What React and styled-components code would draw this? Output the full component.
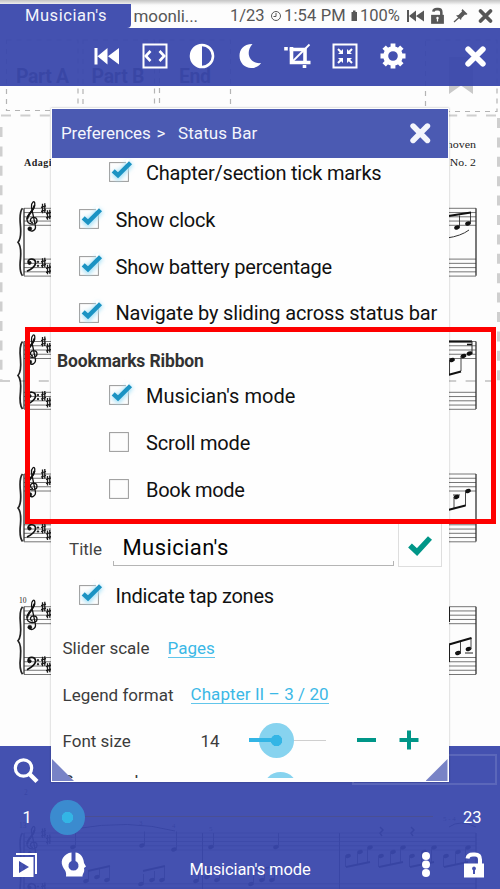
import React from "react";
import styled, { createGlobalStyle } from "styled-components";

const Global = createGlobalStyle`
  * { box-sizing: border-box; }
  body { margin: 0; background: #fdfdfd; }
`;

const Screen = styled.div`
  position: relative;
  display: grid;
  width: 500px;
  height: 889px;
  overflow: hidden;
  background: #fdfdfd;
  font-family: Roboto, "Noto Sans", sans-serif;
  color: #111;
`;

const SheetArt = styled.svg`
  grid-area: 1 / 1;
  display: block;
`;

const Chrome = styled.div`
  grid-area: 1 / 1;
  z-index: 1;
  display: flex;
  flex-direction: column;
  justify-content: space-between;
`;

const Label = styled.span`
  font-size: ${(p) => p.$size || 20}px;
  font-weight: ${(p) => p.$weight || 400};
  letter-spacing: ${(p) => p.$track || 0}px;
  color: ${(p) => p.$color || "inherit"};
  line-height: 1.2;
  white-space: pre;
`;

const StatusBar = styled.div`
  display: flex;
  height: 27.5px;
  padding-top: 4px;
  background: linear-gradient(#c4c4c4 0, #d8d8d8 2px, #fafafa 5px, #fdfdfd 8px);
  color: #575757;
`;

const Tab = styled.div`
  width: 131px;
  padding: 2px 0 0 25px;
  border-bottom-right-radius: 4px;
  background: #4451b0;
  color: #f3f4fb;
`;

const StatusText = styled.div`
  width: ${(p) => p.$w}px;
  padding: 2px 0 0 ${(p) => p.$pad || 0}px;
`;

const StatusIcons = styled.svg`
  display: block;
  width: 95px;
  height: 23px;
`;

const Toolbar = styled.div`
  display: grid;
  grid-template-columns: 83px repeat(7, 47.7px) 1fr;
  align-items: center;
  justify-items: center;
  height: 58px;
  padding-bottom: 1px;
  background: rgba(58, 72, 172, 0.95);
  color: #fff;
`;

const Icon = styled.svg`
  display: block;
  width: ${(p) => p.$s || 28}px;
  height: ${(p) => p.$s || 28}px;
  overflow: visible;
`;

const CloseSlot = styled.div`
  justify-self: end;
  margin-right: 14px;
`;

const Footer = styled.div`
  height: 143.5px;
  display: grid;
  grid-template-rows: 48px 48px 47.5px;
  background: rgba(58, 72, 172, 0.95);
  color: #fff;
`;

const SearchRow = styled.div`
  display: flex;
  align-items: center;
  justify-content: space-between;
  padding: 0 3px 0 12px;
`;

const SearchBox = styled.div`
  width: 145px;
  height: 31px;
  margin-top: -1px;
  border: 2px solid #5b67ba;
`;

const PageRow = styled.div`
  display: grid;
  grid-template-columns: 49.5px 1fr 67px;
  align-items: center;
`;

const PageLabel = styled.div`
  padding-left: ${(p) => p.$pad}px;
`;

const PageTrack = styled.div`
  display: flex;
  align-items: center;
  height: 35px;
  background: linear-gradient(#4a4f93, #4a4f93) 17px 16px / 100% 1px no-repeat;
`;

const Thumb = styled.div`
  width: 35px;
  height: 35px;
  border-radius: 50%;
  background:
    linear-gradient(#33b5e5, #33b5e5) 0 15.5px / ${(p) => (p.$bar ? 17 : 0)}px 4px no-repeat,
    radial-gradient(circle, #33b5e5 5.4px, ${(p) => p.$halo} 6px);
`;

const ModeRow = styled.div`
  display: grid;
  grid-template-columns: 50px 48px 1fr 48px 53px;
  align-items: center;
  justify-items: center;
`;

const ModeLabel = styled.div`
  padding-top: 9px;
  padding-left: 3px;
`;

const Dialog = styled.section`
  position: absolute;
  z-index: 2;
  left: 51px;
  top: 107.5px;
  width: 397.5px;
  height: 674.5px;
  padding: 1px 1px 4px;
  background: #fefefe;
  box-shadow: 0 0 2px rgba(0, 0, 0, 0.3);
`;

const DialogHeader = styled.header`
  display: flex;
  align-items: center;
  height: 49px;
  padding: 0 17px 0 9px;
  background: #4b5ab2;
  color: #f4f5fc;
`;

const Crumb = styled.div`
  width: ${(p) => p.$w}px;
`;

const HeaderClose = styled.div`
  margin-left: auto;
`;

const Viewport = styled.div`
  height: 620px;
  overflow: hidden;
`;

const Options = styled.div`
  margin-top: -8.7px;
`;

const CheckRow = styled.label`
  display: flex;
  align-items: center;
  height: 46.8px;
  padding-left: ${(p) => (p.$nested ? 57 : 26.5)}px;
  gap: 17px;
`;

const CheckText = styled.div`
  padding-top: 1.5px;
`;

const Heading = styled.h3`
  height: 36px;
  margin: 0;
  padding: 14.5px 0 0 5px;
  line-height: 1;
`;

const TitleRow = styled.div`
  display: flex;
  height: 59px;
  padding-left: 17px;
`;

const TitleLabel = styled.div`
  width: 43.5px;
  padding-top: 27px;
`;

const TitleField = styled.div`
  position: relative;
  width: 281px;
  height: 54px;
  padding: 23px 0 0 10px;
  border-bottom: 1.5px solid #b5b5b5;
  color: #050505;
  &::before, &::after {
    content: "";
    position: absolute;
    bottom: 0;
    width: 1px;
    height: 4px;
    background: #b5b5b5;
  }
  &::before { left: 0; }
  &::after { right: 0; }
`;

const ApplyButton = styled.div`
  display: grid;
  place-items: center;
  width: 44px;
  height: 47px;
  margin: 8px 0 0 4px;
  padding-top: 5px;
  border: 1px solid #dedede;
`;

const SettingRow = styled.div`
  display: flex;
  align-items: center;
  height: 46.5px;
  margin-top: ${(p) => p.$gap || 0}px;
  padding-left: 10.5px;
  color: #3c3c3c;
`;

const PeekRow = styled(SettingRow)`
  align-items: flex-start;
  padding-top: 7.5px;
`;

const Cell = styled.div`
  width: ${(p) => p.$w}px;
`;

const PeekLabel = styled(Cell)`
  margin-top: -1px;
`;

const Link = styled(Label)`
  display: inline-block;
  border-bottom: 1.5px solid #62c6eb;
  line-height: 18px;
`;

const Slider = styled.div`
  display: flex;
  align-items: center;
  width: 77px;
  height: 35px;
  margin-top: -2px;
  padding-left: 10px;
  background:
    linear-gradient(#33b5e5, #33b5e5) 0 15.5px / 27px 4px no-repeat,
    linear-gradient(#cfcfcf, #cfcfcf) 0 17px / 77px 1px no-repeat;
`;

const Steppers = styled.svg`
  margin: -2px 0 0 31px;
  width: 64px;
  height: 24px;
`;

const Corner = styled.div`
  position: absolute;
  bottom: 1px;
  ${(p) => (p.$right ? "right: 1px;" : "left: 1px;")}
  width: 22px;
  height: 22px;
  background: #7883c6;
  clip-path: ${(p) => (p.$right ? "polygon(100% 0, 100% 100%, 0 100%)" : "polygon(0 0, 100% 100%, 0 100%)")};
`;

const Highlight = styled.div`
  position: absolute;
  z-index: 3;
  left: 25px;
  top: 327px;
  width: 471px;
  height: 197px;
  border: 5px solid #fe0000;
`;

const Cross = ({ size = 21 }) => (
  <Icon $s={size} viewBox="0 0 20 20">
    <path d="M3 3 17 17M17 3 3 17" stroke="currentColor" strokeWidth="5.400" strokeLinecap="round" />
  </Icon>
);

const LockShape = ({ hole }) => (
  <>
    <path d="M6 6.500Q6.500 2.500 11.500 2.500H13.500Q18.500 2.500 18.500 7.500V13" fill="none" stroke="currentColor" strokeWidth="4" />
    <rect x="2.500" y="11.500" width="20" height="14" fill="currentColor" />
    <path d="M12.500 14.500a2 2 0 0 1 1 3.700V22h-2V18.200a2 2 0 0 1 1-3.700Z" fill={hole} />
  </>
);

const Check = ({ on }) => (
  <Icon $s={20} viewBox="0 0 20 20">
    <defs>
      <filter id="glow" x="-50%" y="-50%" width="200%" height="200%"><feGaussianBlur stdDeviation="2" /></filter>
    </defs>
    <rect x=".6" y=".6" width="18.800" height="18.800" fill="#fdfdfd" stroke="#999" strokeWidth="1" />
    {on && (
      <>
        <path d="M4.500 10 9.200 14.300 21.500 1" fill="none" stroke="#a8e2f7" strokeWidth="7" filter="url(#glow)" />
        <path d="M17 0 20 -1" stroke="#fff" strokeWidth="4" />
        <path d="M4.200 8.800 9 13.300 21.500 .8" fill="none" stroke="#1b93c3" strokeWidth="4.400" />
      </>
    )}
  </Icon>
);

const Treble = ({ y }) => (
  <g transform={`translate(32 ${y})`} fill="none" stroke="#111">
    <path d="M-3.500 20.500C-1 25 4.500 22 3.300 17L-.5-1C-1-6 3-9 2.800-4 2.300 3-5 5-5 11-5 17 5 17.500 5 12.500 5 8-2 8-1.500 12.500Q-1 14.500 1 14.500" strokeWidth="1.300" />
    <path d="M2.500-3C1.500 3-4.500 6-4.700 11" strokeWidth="2" />
    <circle cx="-2.200" cy="20.500" r="2" fill="#111" strokeWidth=".5" />
  </g>
);

const Bass = ({ y }) => (
  <g transform={`translate(31 ${y})`} fill="none" stroke="#111">
    <path d="M-3 3C-3-2 5-1 4.500 4 4 8 0 10-4 12" strokeWidth="1.700" />
    <circle cx="-1.500" cy="3.500" r="1.600" fill="#111" />
    <circle cx="7" cy="2.500" r=".7" fill="#111" /><circle cx="7" cy="6.500" r=".7" fill="#111" />
  </g>
);

const Sharp = ({ x, y }) => (
  <path d={`M${x - 1} ${y - 4.500}v9.500M${x + 1.300} ${y - 5}v9.500M${x - 2.500} ${y - 1}l5-1.500M${x - 2.500} ${y + 3}l5-1.500`} stroke="#1a1a1a" strokeWidth="1.300" />
);

const Note = ({ x, y, stem = 0 }) => (
  <g>
    <ellipse cx={x} cy={y} rx="2.900" ry="2" transform={`rotate(-20 ${x} ${y})`} fill="#111" />
    {stem !== 0 && <path d={`M${x + (stem < 0 ? 2.500 : -2.500)} ${y}v${stem}`} stroke="#333" strokeWidth=".9" />}
  </g>
);

const System = ({ y }) => (
  <g>
    {[0, 1, 2, 3, 4].map((i) => (
      <path key={i} d={`M24 ${y + i * 4.250}H476M24 ${y + 50.800 + i * 4.250}H476`} stroke="#767676" strokeWidth="1" />
    ))}
    <path d={`M24 ${y}V${y + 67.500}M476 ${y}V${y + 67.500}`} stroke="#333" strokeWidth="1.300" />
    <path d={`M22.500 ${y}Q19 ${y + 4} 20.500 ${y + 18}Q21.500 ${y + 30} 18 ${y + 34}Q21.500 ${y + 38} 20.500 ${y + 50}Q19 ${y + 63} 22.500 ${y + 67.500}`} fill="none" stroke="#222" strokeWidth="1.700" />
    <Treble y={y} />
    <Bass y={y + 51} />
    <Sharp x={43.500} y={y} /><Sharp x={48.500} y={y + 6.500} />
    <Sharp x={43.500} y={y + 54.500} /><Sharp x={48.500} y={y + 61} />
  </g>
);

const SerifGroup = styled.g`
  font-family: "Liberation Serif", serif;
  font-size: ${(p) => p.$size}px;
  fill: #222;
`;

const Sheet = () => (
  <SheetArt width="500" height="889" viewBox="0 0 500 889" aria-hidden="true">
    <g fill="none" stroke="#b4b4b4" strokeWidth="1.200" strokeDasharray="5 5">
      <path d="M6.500 40H78V110.500H6.500Z" /><path d="M83 40H154.500V110.500H83Z" />
      <path d="M159.500 40H230.500V110.500H159.500Z" /><path d="M425.500 40H497V111.500H425.500Z" />
    </g>
    <g fill="none" stroke="#cfcfcf">
      <path d="M1 127V381M498.500 118V381" strokeWidth="3" strokeDasharray="10 9.400" />
      <path d="M1 115.500H500M0 381H500" strokeWidth="2" strokeDasharray="10 9.400" />
    </g>
    <path d="M449 57H473V94L461 85.500 449 94Z" fill="#c9c9c9" />
    <g fill="#333" fontFamily="Roboto" fontWeight="700" fontSize="19.500" textAnchor="middle">
      <text x="42.500" y="83" textLength="53">Part A</text>
      <text x="118" y="83" textLength="53">Part B</text>
      <text x="195" y="83" textLength="32">End</text>
    </g>
    <SerifGroup $size={10}>
      <text x="24" y="166" fontWeight="700" textLength="54">Adagio sost</text>
      <text x="391" y="148" textLength="85" lengthAdjust="spacingAndGlyphs">L. van Beethoven</text>
      <text x="412" y="166" textLength="64" lengthAdjust="spacingAndGlyphs">Op. 27, No. 2</text>
    </SerifGroup>
    <SerifGroup $size={7.500}>
      <text x="19" y="603">10</text>
      <text x="24" y="795">2</text><text x="19" y="828">13</text>
    </SerifGroup>
    {[208.300, 341.500, 474, 606.700, 833].map((y) => <System key={y} y={y} />)}
    <g>
      <Note x={457} y={227.500} stem={-12} /><Note x={468} y={223.500} stem={-11} />
      <path d="M445 216.500 471 212.500" stroke="#111" strokeWidth="2" />
      <path d="M447 238Q461 236 469 230" fill="none" stroke="#333" strokeWidth="1" />
      <path d="M448 341.500H472" stroke="#111" strokeWidth="2.200" /><path d="M467 344.500H472" stroke="#111" strokeWidth="1.600" />
      <path d="M472 341V354" stroke="#333" /><Note x={452} y={360} stem={15} /><Note x={463.500} y={356} stem={15} /><Note x={469.500} y={353.500} />
      <path d="M448 375 461 371.500" stroke="#111" strokeWidth="2" />
      <path d="M453 495H460" stroke="#333" /><Note x={456.500} y={497} stem={12} /><Note x={468} y={491} stem={15} />
      <path d="M448 510 465.500 505.500" stroke="#111" strokeWidth="2" />
      <Note x={458} y={653} stem={-11} /><Note x={468.500} y={649} stem={-11} />
      <path d="M449 644.500 471.500 638" stroke="#111" strokeWidth="2" /><path d="M449.500 607V622M449.500 644V662M455 653h6M465 653h8" stroke="#222" />
    </g>
    <g>
      <path d="M74 829Q130 819 175 831" fill="none" stroke="#222" />
      <path d="M202.500 833V889M339.500 833V889" stroke="#333" />
      <Note x={73} y={847} stem={-14} /><Note x={142} y={845.500} stem={-14} /><Note x={174} y={849.500} stem={-18} />
      <Note x={211} y={847} stem={-14} /><Note x={276} y={847} stem={-14} />
      {[0, 1, 2, 3].map((i) => (
        <g key={i}>
          <Note x={86 + i * 55} y={881 + (i % 2) * 3} stem={-10} />
          <Note x={97 + i * 55} y={877 + (i % 2) * 3} stem={-9} />
          <Note x={107 + i * 55} y={880} stem={-14} />
          <path d={`M${88 + i * 55} 871l22-5`} stroke="#111" strokeWidth="2" />
        </g>
      ))}
      {[348, 381, 412, 446].map((x) => (
        <g key={x}>
          <Note x={x} y={856} stem={11} /><Note x={x + 12} y={852} stem={13} /><Note x={x + 22} y={847.500} stem={15} />
          <path d={`M${x - 2} 867l24-5`} stroke="#111" strokeWidth="2" />
        </g>
      ))}
      <path d="M380 827l3 3-3 3 2 3M411 827l3 3-3 3 2 3" fill="none" stroke="#222" strokeWidth="1.500" />
      <path d="M449 827Q460 819 476 827" fill="none" stroke="#222" />
      <SerifGroup $size={7}>
        <text x="139" y="825">3</text><text x="172" y="828">4</text><text x="209" y="831">5</text><text x="443" y="821">5 - 4</text>
      </SerifGroup>
    </g>
  </SheetArt>
);

const Status = () => (
  <StatusBar>
    <Tab><Label $size={16.500} $track={0.550}>Musician's</Label></Tab>
    <StatusText $w={99} $pad={2.500}><Label $size={17} $track={-0.100}>moonli...</Label></StatusText>
    <StatusText $w={40}><Label $size={16.500}>1/23</Label></StatusText>
    <Icon $s={12} viewBox="0 0 12 12">
      <g transform="translate(0 6)"><circle cx="6" cy="6" r="4.500" fill="none" stroke="currentColor" /><path d="M6 3V6.500H3.500" fill="none" stroke="currentColor" /></g>
    </Icon>
    <StatusText $w={68} $pad={2}><Label $size={16.500} $track={0.150}>1:54 PM</Label></StatusText>
    <Icon $s={9} viewBox="0 0 9 9">
      <path d="M1.500 8H3V6.500H5.500V8H7V17H1.500Z" fill="currentColor" />
    </Icon>
    <StatusText $w={46} $pad={1}><Label $size={16.500}>100%</Label></StatusText>
    <StatusIcons viewBox="405 4 95 23">
      <g fill="currentColor">
        <path d="M407 10h2v12h-2zM416 10.500v11L409 16zM424 10.500v11L416 16z" />
        <g transform="translate(429.500 7.500) scale(.64)"><LockShape hole="#fdfdfd" /></g>
        <path d="M462.500 9 467.500 14 466 15 465 14.500 461.500 18 461 20 456 15.500 458.500 15 462 11.500 461.500 10.500Z" />
        <path d="M459 17.500 454 22" stroke="currentColor" strokeWidth="1.300" />
      </g>
      <path d="M480.500 11 490.500 21M490.500 11 480.500 21" stroke="currentColor" strokeWidth="3.800" strokeLinecap="round" />
    </StatusIcons>
  </StatusBar>
);

const Tools = () => (
  <Toolbar>
    <span />
    <Icon viewBox="0 0 28 28"><path d="M1.500 6H4.500V22.500H1.500ZM14.500 6V22.500L4.500 14.200ZM26 6V22.500L15 14.200Z" fill="currentColor" /></Icon>
    <Icon viewBox="0 0 28 28"><path d="M2.500 2.500H25.500V25.500H2.500Z" fill="none" stroke="currentColor" strokeWidth="2" /><path d="M9.500 9 4.800 14 9.500 19M18.500 9 23.200 14 18.500 19" fill="none" stroke="currentColor" strokeWidth="2.600" /></Icon>
    <Icon viewBox="0 0 28 28"><circle cx="14" cy="14" r="11" fill="none" stroke="currentColor" strokeWidth="2.600" /><path d="M14 3A11 11 0 0 0 14 25Z" fill="currentColor" /></Icon>
    <Icon viewBox="0 0 28 28"><path d="M16.500 2C7 2 3.500 8 3.500 14 3.500 21 9 26 15 26 20 26 23 24 25 21 14 22.500 8.500 11 16.500 2Z" fill="currentColor" /></Icon>
    <Icon viewBox="0 0 28 28"><path d="M5.500 7.500H21V21.500M7.500 5V20.500H26.500M2 5V8.500M20.500 23V26" fill="none" stroke="currentColor" strokeWidth="3.600" /><path d="M9 19 25.500 2.500" stroke="currentColor" strokeWidth="1.800" /></Icon>
    <Icon viewBox="0 0 28 28">
      <path d="M2.500 2.500H25.500V25.500H2.500Z" fill="none" stroke="currentColor" strokeWidth="2" />
      <path d="M12 7V12H7ZM16 7V12H21ZM7 16H12V21ZM21 16H16V21Z" fill="currentColor" />
      <path d="M7 7 11 11M21 7 17 11M7 21 11 17M21 21 17 17" stroke="currentColor" strokeWidth="2" />
    </Icon>
    <Icon viewBox="0 0 28 28">
      <circle cx="14" cy="14" r="7.300" fill="none" stroke="currentColor" strokeWidth="5" />
      {[0, 45, 90, 135].map((a) => <path key={a} d="M14 1.500V6M14 22V26.500" transform={`rotate(${a} 14 14)`} stroke="currentColor" strokeWidth="4.800" />)}
    </Icon>
    <CloseSlot><Cross size={21} /></CloseSlot>
  </Toolbar>
);

const Bottom = () => (
  <Footer>
    <SearchRow>
      <Icon $s={28} viewBox="0 0 28 28"><circle cx="11.500" cy="12" r="8.200" fill="none" stroke="currentColor" strokeWidth="3.200" /><path d="M17 17.500 25 25.500" stroke="currentColor" strokeWidth="4.500" /></Icon>
      <SearchBox />
    </SearchRow>
    <PageRow>
      <PageLabel $pad={22.500}><Label $size={16.500}>1</Label></PageLabel>
      <PageTrack><Thumb $halo="#3b8bcf" /></PageTrack>
      <PageLabel $pad={30}><Label $size={16.500}>23</Label></PageLabel>
    </PageRow>
    <ModeRow>
      <Icon $s={28} viewBox="0 0 28 28">
        <path d="M5 2H26V23H24V4H5Z" fill="currentColor" />
        <path fillRule="evenodd" d="M2 6H22.500V26H2ZM8 10V22L18 16Z" fill="currentColor" />
      </Icon>
      <Icon $s={28} viewBox="0 0 28 28">
        <path d="M11.500 1.500C4 2.500 0 9 2.500 15 3.500 18 7 20 6 25.500H22.500C22.500 22 25 22 24 17L26 15.500 24 12C23.500 6 20.500 2 15.500 1.500V10A5 5 0 1 1 11.500 10Z" fill="currentColor" />
      </Icon>
      <ModeLabel><Label $size={16.500} $track={-0.100}>Musician's mode</Label></ModeLabel>
      <Icon $s={28} viewBox="-3 0 28 28">{[5, 13.500, 22].map((y) => <circle key={y} cx="14" cy={y} r="4" fill="currentColor" />)}</Icon>
      <Icon $s={26} viewBox="-.5 0 26 26"><LockShape hole="#4451b0" /></Icon>
    </ModeRow>
  </Footer>
);

const Option = ({ nested, on, track, children }) => (
  <CheckRow $nested={nested}>
    <Check on={on} />
    <CheckText><Label $track={track}>{children}</Label></CheckText>
  </CheckRow>
);

const Preferences = () => (
  <Dialog>
    <DialogHeader>
      <Crumb $w={95.500}><Label $size={17} $track={-0.100}>Preferences</Label></Crumb>
      <Crumb $w={21.500}><Label $size={17}>&gt;</Label></Crumb>
      <Label $size={17} $track={0.100}>Status Bar</Label>
      <HeaderClose><Cross size={20.500} /></HeaderClose>
    </DialogHeader>
    <Viewport>
      <Options>
        <Option nested on track={-0.220}>Chapter/section tick marks</Option>
        <Option on track={-0.180}>Show clock</Option>
        <Option on track={-0.210}>Show battery percentage</Option>
        <Option on track={-0.150}>Navigate by sliding across status bar</Option>
        <Heading><Label $size={17.500} $weight={700} $track={-0.150} $color="#333">Bookmarks Ribbon</Label></Heading>
        <Option nested on track={0.050}>Musician's mode</Option>
        <Option nested track={-0.150}>Scroll mode</Option>
        <Option nested track={-0.280}>Book mode</Option>
        <TitleRow>
          <TitleLabel><Label $size={17} $color="#444">Title</Label></TitleLabel>
          <TitleField><Label $size={22} $track={0.400}>Musician's</Label></TitleField>
          <ApplyButton>
            <Icon $s={24} viewBox="0 0 24 24"><path d="M2 11.500 9 18 22 4" fill="none" stroke="#009688" strokeWidth="5.500" /></Icon>
          </ApplyButton>
        </TitleRow>
        <Option on track={-0.250}>Indicate tap zones</Option>
        <SettingRow $gap={7}>
          <Cell $w={105}><Label $size={17}>Slider scale</Label></Cell>
          <Link $size={17} $color="#3bb8e6">Pages</Link>
        </SettingRow>
        <SettingRow>
          <Cell $w={128}><Label $size={17}>Legend format</Label></Cell>
          <Link $size={17} $track={0.080} $color="#3bb8e6">Chapter II – 3 / 20</Link>
        </SettingRow>
        <SettingRow>
          <Cell $w={138}><Label $size={17}>Font size</Label></Cell>
          <Cell $w={48.500}><Label $size={17}>14</Label></Cell>
          <Slider><Thumb $bar $halo="#87d3ef" /></Slider>
          <Steppers viewBox="0 0 64 24"><path d="M0 12H19M42.500 12H61.500M52 2.500V21.500" stroke="#009688" strokeWidth="4" /></Steppers>
        </SettingRow>
        <PeekRow>
          <PeekLabel $w={200}><Label $size={17}>Progress bar</Label></PeekLabel>
          <Thumb $halo="#87d3ef" />
        </PeekRow>
      </Options>
    </Viewport>
    <Corner /><Corner $right />
  </Dialog>
);

export default function App() {
  return (
    <>
      <Global />
      <Screen>
        <Sheet />
        <Chrome>
          <div><Status /><Tools /></div>
          <Bottom />
        </Chrome>
        <Preferences />
        <Highlight />
      </Screen>
    </>
  );
}
